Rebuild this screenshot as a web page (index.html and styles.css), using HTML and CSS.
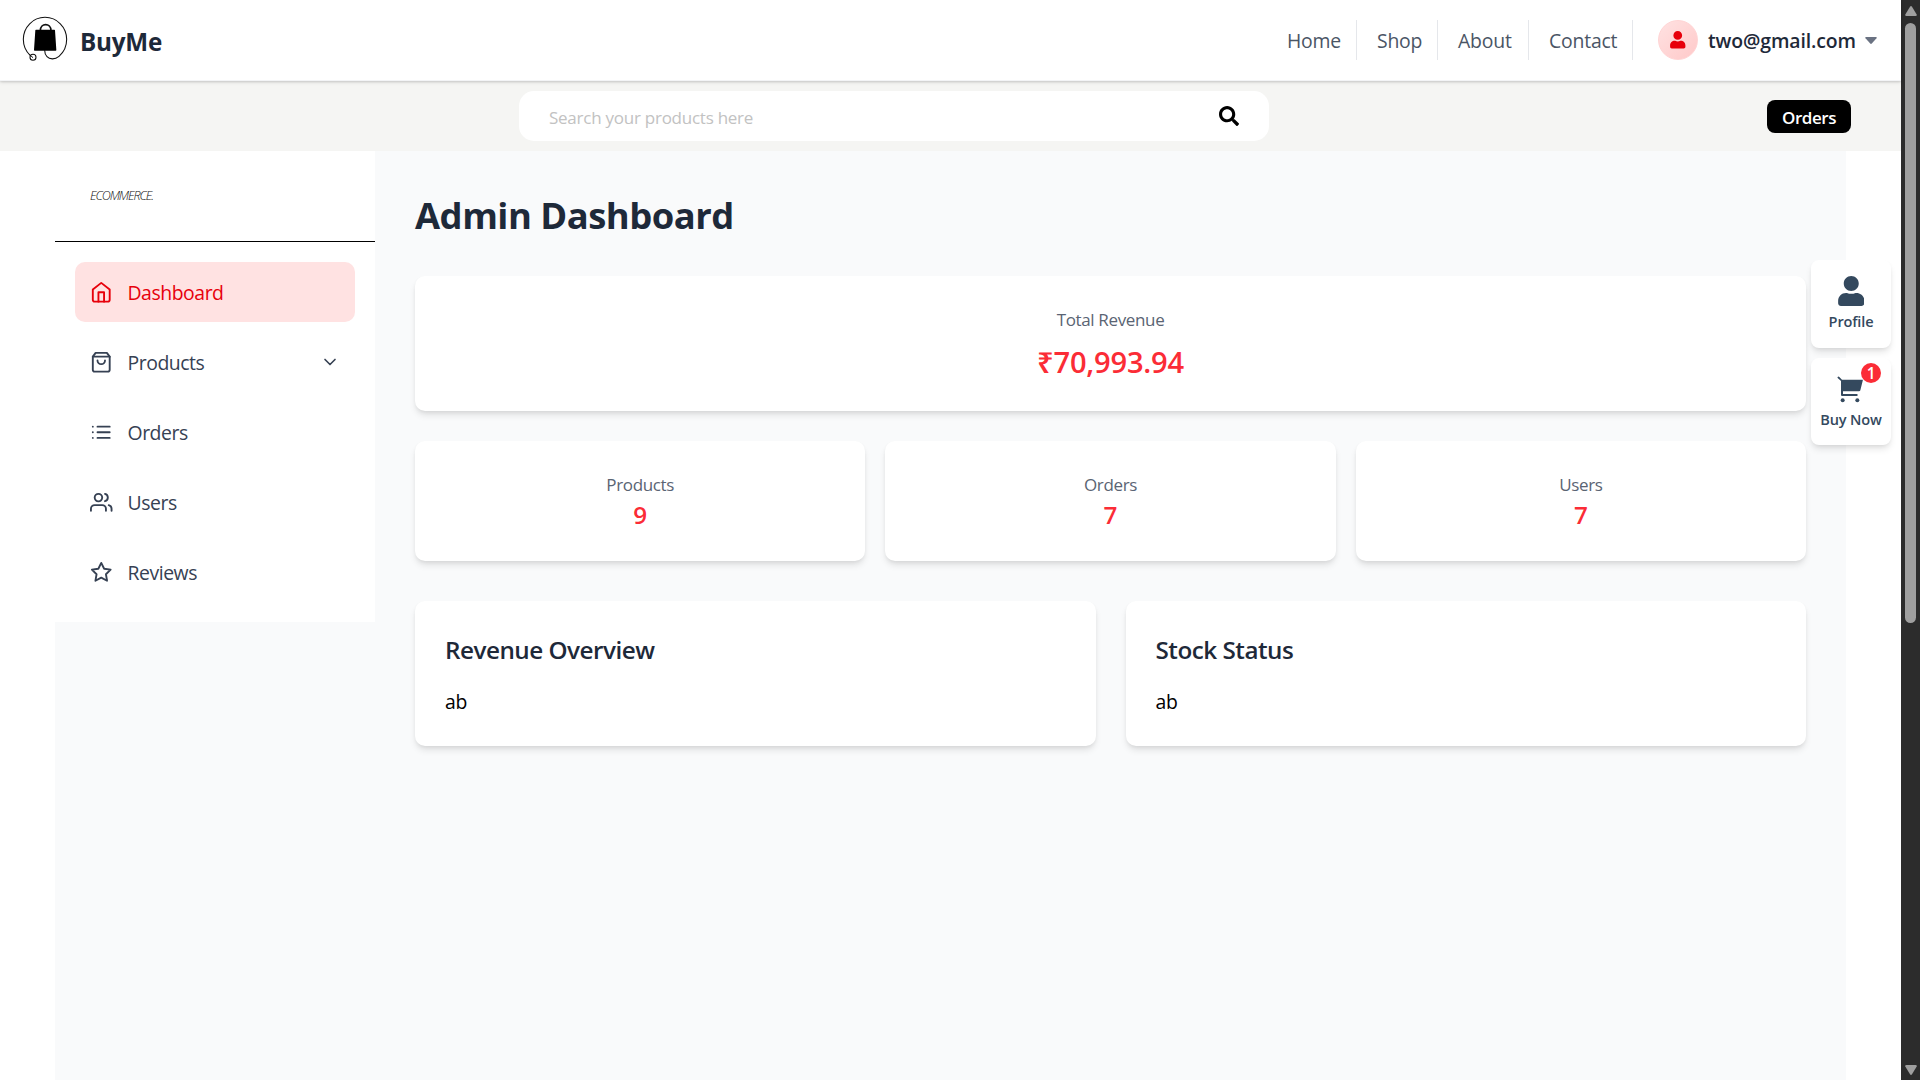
FILE: index.html
```html
<!DOCTYPE html>
<html lang="en">
<head>
<meta charset="utf-8">
<title>BuyMe - Admin Dashboard</title>
<link rel="stylesheet" href="styles.css">
</head>
<body>
<div class="window">
  <div class="page">
    <header class="navbar">
      <a class="brand">
        <svg class="brand-logo" viewBox="0 0 180 180" fill="none" stroke="#111">
          <path stroke-width="3.2" d="M46 137C32 124 25 106 25 88A65 66 0 1 1 155 88C155 108 145 128 132 139C120 149 104 149 96 140C90 134 89 130 89 121"/>
          <ellipse cx="54" cy="142" rx="9" ry="9" stroke-width="3.2"/>
          <path stroke-width="3" d="M43 133L54 143"/>
          <path stroke-width="5" d="M76 62C76 38 108 38 108 62"/>
          <path fill="#000" stroke="none" d="M63 59H118Q120 59 120 61L124 120Q124 122 122 122H59Q57 122 57 120L61 61Q61 59 63 59Z"/>
        </svg>
        <span class="brand-name">BuyMe</span>
      </a>
      <nav class="nav">
        <a class="nav-link home">Home</a>
        <a class="nav-link shop">Shop</a>
        <a class="nav-link about">About</a>
        <a class="nav-link contact">Contact</a>
      </nav>
      <div class="account">
        <span class="avatar">
          <svg viewBox="0 0 448 512" fill="#e7000b"><path d="M224 256c70.7 0 128-57.3 128-128S294.7 0 224 0 96 57.3 96 128s57.3 128 128 128zm89.6 32h-16.7c-22.2 10.2-46.9 16-72.9 16s-50.6-5.8-72.9-16h-16.7C60.2 288 0 348.2 0 422.4V464c0 26.5 21.5 48 48 48h352c26.5 0 48-21.5 48-48v-41.6c0-74.2-60.2-134.4-134.4-134.4z"/></svg>
        </span>
        <span class="email">two@gmail.com</span>
        <svg class="caret" viewBox="0 0 12 7"><path fill="#6a7282" d="M1 0H11Q12.4 0 11.5 1.2L6.8 6.5Q6 7.3 5.2 6.5L.5 1.2Q-.4 0 1 0Z"/></svg>
      </div>
    </header>

    <div class="toolbar">
      <div class="search">
        <span class="placeholder">Search your products here</span>
        <svg class="search-icon" viewBox="0 0 512 512"><path d="M505 442.7L405.3 343c-4.5-4.5-10.6-7-17-7H372c27.6-35.3 44-79.7 44-128C416 93.1 322.9 0 208 0S0 93.1 0 208s93.1 208 208 208c48.3 0 92.7-16.4 128-44v16.3c0 6.4 2.5 12.5 7 17l99.7 99.7c9.4 9.4 24.6 9.4 33.9 0l28.3-28.3c9.4-9.4 9.4-24.6.1-34zM208 336c-70.7 0-128-57.2-128-128 0-70.7 57.2-128 128-128 70.7 0 128 57.2 128 128 0 70.7-57.2 128-128 128z"/></svg>
      </div>
      <a class="orders-button">Orders</a>
    </div>

    <div class="layout">
      <aside class="sidebar">
        <div class="sidebar-head"><span class="wordmark">ECOMMERCE.</span></div>
        <ul class="menu">
          <li class="menu-item active">
            <svg class="icon" viewBox="0 0 24 24"><path d="M3 9l9-7 9 7v11a2 2 0 0 1-2 2H5a2 2 0 0 1-2-2z"/><path d="M9 22V12h6v10"/></svg>
            <span>Dashboard</span>
          </li>
          <li class="menu-item">
            <svg class="icon" viewBox="0 0 24 24"><path d="M6 2L3 6v14a2 2 0 0 0 2 2h14a2 2 0 0 0 2-2V6l-3-4z"/><path d="M3 6h18"/><path d="M16 10a4 4 0 0 1-8 0"/></svg>
            <span>Products</span>
            <svg class="icon chevron" viewBox="0 0 24 24"><path d="M6 9l6 6 6-6"/></svg>
          </li>
          <li class="menu-item">
            <svg class="icon" viewBox="0 0 24 24"><path d="M8 6h13M8 12h13M8 18h13M3 6h.01M3 12h.01M3 18h.01"/></svg>
            <span>Orders</span>
          </li>
          <li class="menu-item">
            <svg class="icon" viewBox="0 0 24 24"><path d="M17 21v-2a4 4 0 0 0-4-4H5a4 4 0 0 0-4 4v2"/><circle cx="9" cy="7" r="4"/><path d="M23 21v-2a4 4 0 0 0-3-3.87M16 3.13a4 4 0 0 1 0 7.75"/></svg>
            <span>Users</span>
          </li>
          <li class="menu-item">
            <svg class="icon" viewBox="0 0 24 24"><path d="M12 2l3.09 6.26L22 9.27l-5 4.87 1.18 6.88L12 17.77l-6.18 3.25L7 14.14 2 9.27l6.91-1.01z"/></svg>
            <span>Reviews</span>
          </li>
        </ul>
      </aside>

      <main class="content">
        <h1 class="title">Admin Dashboard</h1>
        <section class="card revenue">
          <p class="label">Total Revenue</p>
          <p class="amount">₹70,993.94</p>
        </section>
        <section class="stats">
          <div class="card stat"><p class="label">Products</p><p class="count">9</p></div>
          <div class="card stat"><p class="label">Orders</p><p class="count">7</p></div>
          <div class="card stat"><p class="label">Users</p><p class="count">7</p></div>
        </section>
        <section class="panels">
          <div class="card panel"><h2 class="panel-title">Revenue Overview</h2><p class="panel-text">ab</p></div>
          <div class="card panel"><h2 class="panel-title">Stock Status</h2><p class="panel-text">ab</p></div>
        </section>
      </main>
    </div>
  </div>

  <div class="scrollbar">
    <svg class="arrow" viewBox="0 0 12 10"><path d="M5 .8Q6 -.6 7 .8L11.7 8.4Q12.2 10 10.6 10H1.4Q-.2 10 .3 8.4Z"/></svg>
    <div class="thumb"></div>
    <svg class="arrow down" viewBox="0 0 12 10"><path d="M5 9.2Q6 10.6 7 9.2L11.7 1.6Q12.2 0 10.6 0H1.4Q-.2 0 .3 1.6Z"/></svg>
  </div>

  <div class="quick">
    <a class="quick-item">
      <svg class="quick-user" viewBox="0 0 448 512"><path d="M224 256c70.7 0 128-57.3 128-128S294.7 0 224 0 96 57.3 96 128s57.3 128 128 128zm89.6 32h-16.7c-22.2 10.2-46.9 16-72.9 16s-50.6-5.8-72.9-16h-16.7C60.2 288 0 348.2 0 422.4V464c0 26.5 21.5 48 48 48h352c26.5 0 48-21.5 48-48v-41.6c0-74.2-60.2-134.4-134.4-134.4z"/></svg>
      <span>Profile</span>
    </a>
    <a class="quick-item cart">
      <svg class="quick-cart" viewBox="0 0 78 80"><path d="M3 2Q5 1 7 3L15 11H77Q78 11 77.500 13L70 43Q69.500 46 66 46H18V54H60Q62 54 62 57T60 60H15Q12 60 12 57V15L2 6Q0 4 3 2Z"/><circle cx="17" cy="73" r="6"/><circle cx="61" cy="73" r="6"/></svg>
      <span>Buy Now</span>
      <b class="badge">1</b>
    </a>
  </div>
</div>
</body>
</html>
```
FILE: styles.css
```css
* { box-sizing: border-box; margin: 0; padding: 0; }

body {
  background: #fff;
  font-family: "Open Sans", "Noto Sans", sans-serif;
  font-size: 19.4px;
  line-height: 30px;
  color: #000;
  overflow: hidden;
}

svg { display: block; flex: none; }

.window {
  position: relative;
  display: grid;
  grid-template-columns: 1fr 19px;
  height: 1080px;
}

.page { display: flex; flex-direction: column; min-width: 0; }

/* Top navigation */
.navbar {
  position: relative;
  display: flex;
  align-items: center;
  height: 81px;
  padding: 0 24px 0 15px;
  background: #fff;
  border-bottom: 1px solid #f3f4f6;
  box-shadow: 0 1px 4px rgba(0, 0, 0, .12), 0 1px 2px rgba(0, 0, 0, .1);
}
.brand { display: flex; align-items: center; gap: 5px; margin-right: auto; }
.brand-logo { width: 60px; height: 60px; }
.brand-name {
  padding-top: 3px;
  font-size: 24.25px;
  font-weight: 700;
  letter-spacing: -.22px;
  color: #1e2939;
}
.nav { display: flex; color: #4a5565; letter-spacing: -.2px; }
.nav-link {
  height: 40px;
  padding-left: 20px;
  line-height: 41px;
  border-right: 1px solid #e5e7eb;
}
.home { width: 90px; }
.shop { width: 81px; }
.about { width: 91px; }
.contact { width: 104px; }
.account { display: flex; align-items: center; padding-left: 25px; }
.avatar {
  display: flex;
  align-items: center;
  justify-content: center;
  width: 40px;
  height: 40px;
  border: 1px solid #ffd5d5;
  border-radius: 50%;
  background: linear-gradient(135deg, #ffe2e2, #ffc9c9);
}
.avatar svg { width: 15.5px; height: 17.5px; }
.email {
  width: 157px;
  padding: 1px 0 0 10px;
  font-weight: 600;
  letter-spacing: -.11px;
  color: #1e2939;
}
.caret { width: 12px; height: 7px; margin-left: 10px; }

/* Search strip */
.toolbar {
  display: grid;
  grid-template-columns: 519px 750px 1fr;
  align-items: center;
  height: 70px;
  padding-right: 50px;
  background: #f5f5f3;
}
.search {
  grid-column: 2;
  display: flex;
  align-items: center;
  justify-content: space-between;
  height: 50px;
  padding: 0 30px 0 29px;
  border-radius: 15px;
  background: #fff;
}
.placeholder {
  padding: 3px 0 0 1px;
  font-size: 17px;
  letter-spacing: -.25px;
  color: #c2c2c2;
}
.search-icon { width: 20px; height: 20px; }
.orders-button {
  justify-self: end;
  width: 84px;
  height: 33px;
  border-radius: 8px;
  background: #000;
  color: #fff;
  font-size: 17px;
  font-weight: 600;
  letter-spacing: -.47px;
  line-height: 35px;
  text-align: center;
}

/* Page body */
.layout {
  flex: 1;
  display: flex;
  align-items: flex-start;
  margin: 0 55px;
  background: #f9fafb;
}
.sidebar { width: 320px; height: 471px; background: #fff; color: #364153; }
.sidebar-head {
  height: 91px;
  padding: 30px 35px;
  border-bottom: 1px solid #000;
}
.wordmark {
  display: block;
  font-size: 12.5px;
  font-style: italic;
  font-weight: 300;
  letter-spacing: -1.1px;
  color: #111;
}
.menu {
  display: flex;
  flex-direction: column;
  gap: 10px;
  padding: 20px;
  list-style: none;
}
.menu-item {
  display: flex;
  align-items: center;
  gap: 15px;
  height: 60px;
  padding: 0 15px;
  border-radius: 10px;
  letter-spacing: -.45px;
}
.menu-item span { padding-top: 1px; }
.menu-item.active { background: #ffe2e2; color: #e7000b; }
.icon {
  width: 22.5px;
  height: 22.5px;
  fill: none;
  stroke: currentColor;
  stroke-width: 2;
  stroke-linecap: round;
  stroke-linejoin: round;
}
.chevron { width: 20px; height: 20px; margin-left: auto; }

.content { flex: 1; padding: 40px; }
.title {
  padding-top: 2px;
  margin-bottom: 38px;
  font-size: 36.4px;
  font-weight: 700;
  letter-spacing: -.5px;
  line-height: 45px;
  color: #1e2939;
}
.card {
  padding: 30px;
  border-radius: 10px;
  background: #fff;
  box-shadow: 0 5px 7px -1px rgba(0, 0, 0, .1), 0 2px 5px -2px rgba(0, 0, 0, .1);
}
.label {
  padding-top: 1px;
  font-size: 17px;
  line-height: 25px;
  letter-spacing: -.35px;
  color: #5a6473;
}
.revenue { height: 135px; text-align: center; }
.amount {
  margin-top: 10px;
  font-size: 29.1px;
  font-weight: 600;
  line-height: 40px;
  letter-spacing: -.2px;
  color: #fb2c36;
}
.stats {
  display: grid;
  grid-template-columns: repeat(3, 1fr);
  gap: 20px;
  margin: 30px 0 40px;
  text-align: center;
}
.stat { height: 120px; }
.count {
  font-size: 24.25px;
  font-weight: 600;
  line-height: 35px;
  color: #fb2c36;
}
.panels { display: grid; grid-template-columns: 1fr 1fr; gap: 30px; }
.panel { height: 145px; }
.panel-title {
  padding-top: 1px;
  margin-bottom: 20px;
  font-size: 24.25px;
  font-weight: 600;
  line-height: 35px;
  letter-spacing: -.5px;
  color: #1e2939;
}
.panel-text { letter-spacing: -.3px; }

/* Floating shortcuts */
.quick {
  position: absolute;
  top: 260px;
  right: 29px;
  display: flex;
  flex-direction: column;
  gap: 10px;
}
.quick-item {
  position: relative;
  display: flex;
  flex-direction: column;
  align-items: center;
  width: 80px;
  height: 88px;
  padding-top: 16px;
  border-radius: 8px;
  background: #fff;
  box-shadow: 0 5px 7px -1px rgba(0, 0, 0, .1), 0 2px 5px -2px rgba(0, 0, 0, .1);
  color: #34495e;
  fill: #34495e;
  font-size: 14.55px;
  font-weight: 600;
  letter-spacing: -.15px;
  line-height: 20px;
}
.quick-user { width: 26.5px; height: 30px; margin-bottom: 5px; }
.cart { height: 87px; padding-top: 18px; }
.quick-cart { width: 26px; height: 26.7px; margin: 0 2px 6px 0; }
.badge {
  position: absolute;
  top: 5px;
  right: 10px;
  width: 20px;
  height: 20px;
  border-radius: 50%;
  background: #fb2c36;
  color: #fff;
  font-size: 15.5px;
  font-weight: 600;
  text-align: center;
}

/* Window scrollbar */
.scrollbar {
  display: flex;
  flex-direction: column;
  align-items: center;
  padding: 6px 0 5px;
  background: #2c2c2c;
  fill: #9f9f9f;
}
.arrow { width: 12px; height: 10px; }
.thumb { width: 11px; height: 600px; margin-top: 7px; border-radius: 6px; background: #9f9f9f; }
.down { margin-top: auto; }
```
